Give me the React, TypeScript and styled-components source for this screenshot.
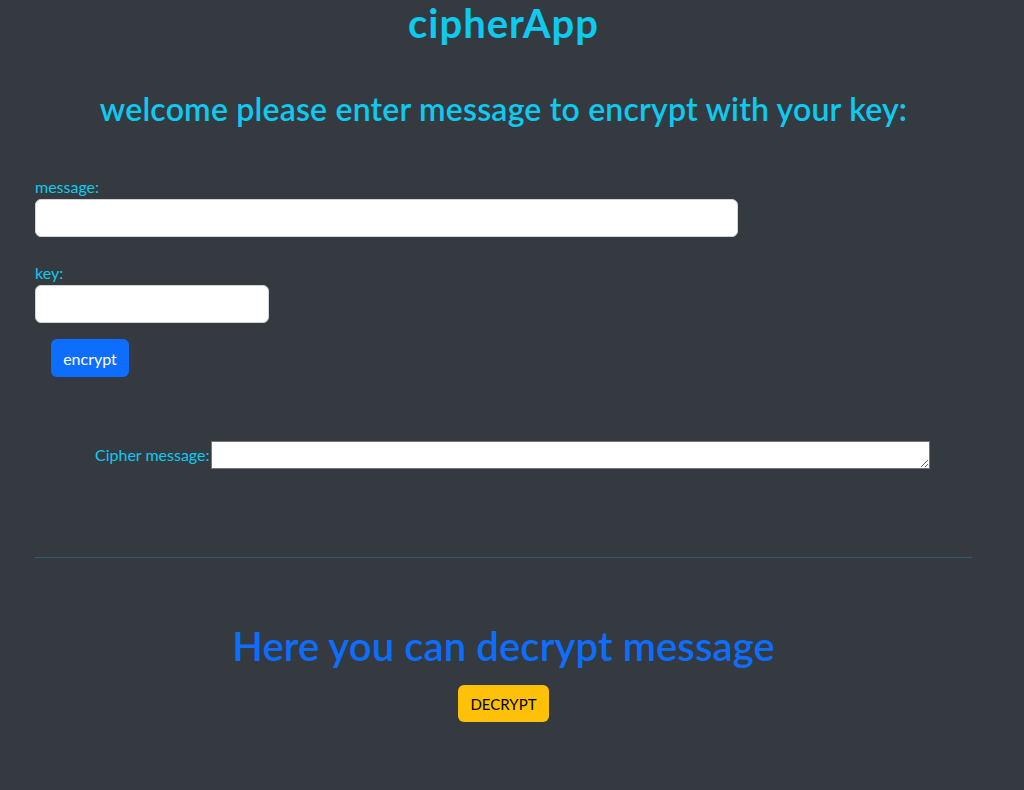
import React from "react";
import styled, { createGlobalStyle } from "styled-components";

const Global = createGlobalStyle`
  html, body { margin: 0; padding: 0; background: #343a40; }
  body { font-family: Lato, "Open Sans", sans-serif; }
  * { box-sizing: border-box; }
`;

const Page = styled.div`
  min-height: 790px;
  background: #343a40;
  overflow: hidden;
`;

const Container = styled.div`
  width: 937px;
  margin-left: 35px;
  display: flex;
  flex-direction: column;
`;

const Title = styled.h1`
  margin: 0;
  font-size: 40px;
  line-height: 46px;
  font-weight: 700;
  letter-spacing: 1px;
  color: #0dcaf0;
  text-align: center;
`;

const Subtitle = styled.h2`
  margin: 44px 0 0;
  font-size: 32px;
  line-height: 38px;
  font-weight: 600;
  letter-spacing: 0.2px;
  color: #0dcaf0;
  text-align: center;
`;

const Field = styled.div<{ $top: number }>`
  display: flex;
  flex-direction: column;
  align-items: flex-start;
  margin-top: ${(p) => p.$top}px;
`;

const Label = styled.label`
  font-size: 16px;
  line-height: 24px;
  color: #0dcaf0;
`;

const TextInput = styled.input<{ $w: number }>`
  width: ${(p) => p.$w}px;
  height: 38px;
  border: 1px solid #ced4da;
  border-radius: 6px;
  background: #fff;
  padding: 6px 12px;
  font-size: 16px;
  outline: none;
`;

const Button = styled.button<{ $variant: "primary" | "warning" }>`
  height: 38px;
  padding: 0 12px;
  border: none;
  border-radius: 6px;
  font-family: inherit;
  font-size: ${(p) => (p.$variant === "warning" ? "15px" : "16px")};
  background: ${(p) => (p.$variant === "primary" ? "#0d6efd" : "#ffc107")};
  color: ${(p) => (p.$variant === "primary" ? "#fff" : "#000")};
  text-transform: ${(p) => (p.$variant === "warning" ? "uppercase" : "none")};
  cursor: pointer;
`;

const EncryptButton = styled(Button)`
  align-self: flex-start;
  margin: 16px 0 0 16px;
  width: 78px;
`;

const CipherRow = styled.div`
  display: flex;
  align-items: flex-end;
  margin: 64px 0 0 60px;
`;

const CipherLabel = styled.label`
  font-size: 16px;
  line-height: 24px;
  color: #0dcaf0;
  padding-bottom: 2px;
  width: 116px;
  white-space: nowrap;
`;

const CipherArea = styled.textarea`
  width: 719px;
  height: 28px;
  border: 1px solid #767676;
  border-radius: 0;
  background: #fff;
  margin: 0;
  padding: 2px;
  font-size: 13px;
  display: block;
`;

const Divider = styled.hr`
  width: 100%;
  height: 0;
  margin: 88px 0 0;
  border: 0;
  border-top: 1px solid #2a5e6c;
`;

const DecryptTitle = styled.h2`
  margin: 64px 0 0;
  font-size: 40px;
  line-height: 48px;
  font-weight: 600;
  letter-spacing: 0.1px;
  color: #0d6efd;
  text-align: center;
`;

const DecryptButton = styled(Button)`
  align-self: center;
  margin-top: 15px;
  width: 91px;
  height: 37px;
`;

export default function App() {
  return (
    <Page>
      <Global />
      <Container>
        <Title>cipherApp</Title>
        <Subtitle>welcome please enter message to encrypt with your key:</Subtitle>
        <Field $top={47}>
          <Label htmlFor="msg">message:</Label>
          <TextInput id="msg" $w={703} />
        </Field>
        <Field $top={24}>
          <Label htmlFor="key">key:</Label>
          <TextInput id="key" $w={234} />
        </Field>
        <EncryptButton $variant="primary">encrypt</EncryptButton>
        <CipherRow>
          <CipherLabel htmlFor="cipher">Cipher message:</CipherLabel>
          <CipherArea id="cipher" />
        </CipherRow>
        <Divider />
        <DecryptTitle>Here you can decrypt message</DecryptTitle>
        <DecryptButton $variant="warning">decrypt</DecryptButton>
      </Container>
    </Page>
  );
}
